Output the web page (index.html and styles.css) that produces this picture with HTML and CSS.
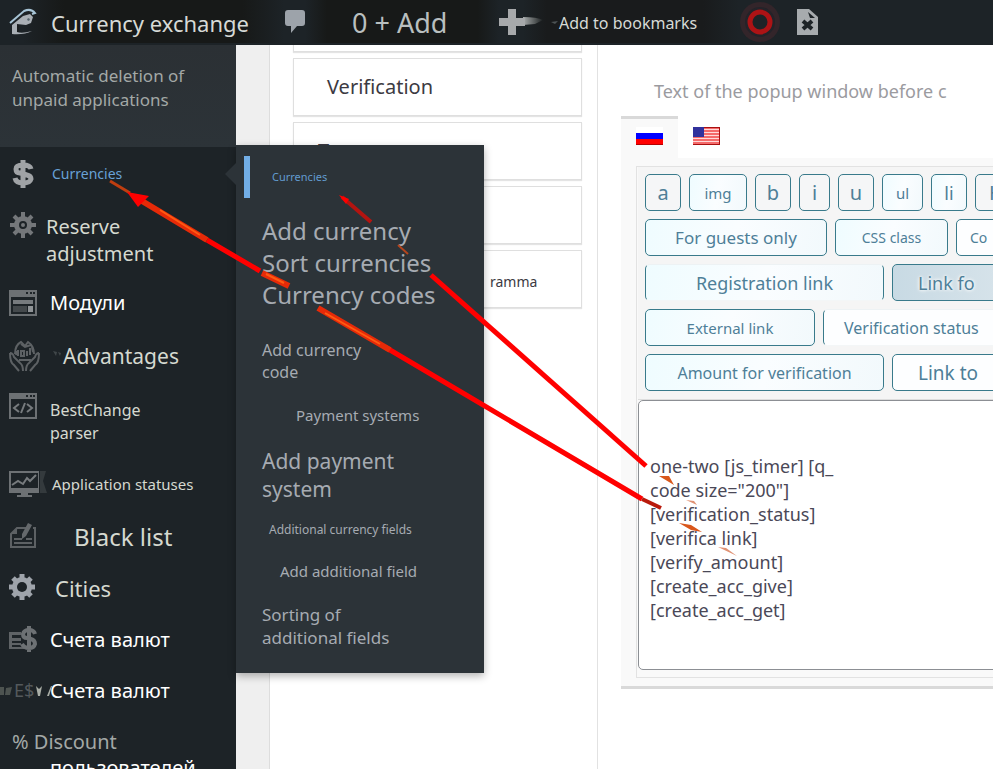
FILE: index.html
```html
<!DOCTYPE html>
<html lang="en">
<head>
<meta charset="utf-8">
<title>Currency exchange</title>
<link rel="stylesheet" href="styles.css">
</head>
<body>
<div class="page">
  <header class="topbar">
    <a class="top-item top-home" href="#">
      <svg width="28" height="28" viewBox="0 0 28 28" aria-hidden="true">
        <path d="M1 15 15 3q7-3 11 2l-3 1" fill="none" stroke="#a7c4d6" stroke-width="2"/>
        <path d="M3 17 14 8l7-2 3 3-2 6-5 2-9-1v8q5 2 15-1-8 4-20 3z" fill="#a9afb5"/>
        <path d="M8 17h2v7H8z" fill="#1b1f21"/>
        <path d="M19 10l2 1-1 2-2-1z" fill="#56646d"/>
      </svg>
      <span>Currency exchange</span>
    </a>
    <a class="top-item top-add" href="#">
      <svg width="22" height="25" viewBox="0 0 22 25" aria-hidden="true">
        <path d="M4 1h14q3 0 3 3v10q0 3-3 3h-5l-6 7v-7H4q-3 0-3-3V4q0-3 3-3z" fill="#9da3aa"/>
      </svg>
      <span>0 + Add</span>
    </a>
    <a class="top-item top-bookmark" href="#">
      <svg width="60" height="28" viewBox="0 0 60 28" aria-hidden="true">
        <defs>
          <linearGradient id="streak"><stop offset="0" stop-color="#a9adad"/><stop offset="1" stop-color="#1b1f20"/></linearGradient>
        </defs>
        <path d="M24 9q14 0 20 3l-8 4-12 1z" fill="url(#streak)"/>
        <path d="M9 1h8v9h9v8h-9v9H9v-9H0v-8h9z" fill="#a7a9ab"/>
        <path d="M52 14l7-1-3 3z" fill="#4c5354"/>
      </svg>
      <span>Add to bookmarks</span>
    </a>
    <a class="top-item" href="#" aria-label="Status">
      <svg width="42" height="42" viewBox="0 0 42 42" aria-hidden="true">
        <circle cx="21" cy="21" r="20" fill="#33252a"/>
        <circle cx="21" cy="21" r="15" fill="#242329"/>
        <circle cx="21" cy="21" r="10" fill="#1d2327" stroke="#ad1315" stroke-width="5"/>
      </svg>
    </a>
    <a class="top-item" href="#" aria-label="Clear cache">
      <svg width="22" height="28" viewBox="0 0 22 28" aria-hidden="true">
        <path d="M0 1h12l9 8v18H0z" fill="#a7abae"/>
        <path d="M11 4l7 6h-5z" fill="#1d2327"/>
        <path d="M6 13l9 8M15 13l-9 8" stroke="#1d2327" stroke-width="4"/>
      </svg>
    </a>
  </header>

  <div class="body">
    <nav class="sidebar" aria-label="Main menu">
      <a class="intro" href="#">Automatic deletion of<br>unpaid applications</a>
      <ul class="menu">
        <li class="item current">
          <a href="#">
            <svg class="icon" width="28" height="30" viewBox="0 0 28 30" aria-hidden="true">
              <path d="M22 10q-1-4-8-4t-7 4q0 4 4 4l7 2q4 1 4 4-1 4-8 4t-8-5M14 1v28" fill="none" stroke="#a0a3a6" stroke-width="5"/>
            </svg>
            <span class="label s14 in6">Currencies</span>
          </a>
          <div class="flyout">
            <a class="flyout-head" href="#">Currencies</a>
            <div class="flyout-list">
              <div class="flyout-group">
                <a href="#">Add currency</a>
                <a href="#">Sort currencies</a>
                <a href="#">Currency codes</a>
              </div>
              <a class="fly-code" href="#">Add currency<br>code</a>
              <a class="fly-pay" href="#">Payment systems</a>
              <a class="fly-addpay" href="#">Add payment<br>system</a>
              <a class="fly-fields" href="#">Additional currency fields</a>
              <a class="fly-addfield" href="#">Add additional field</a>
              <a class="fly-sort" href="#">Sorting of<br>additional fields</a>
            </div>
          </div>
        </li>
        <li class="item double">
          <a href="#">
            <svg class="icon raised" width="28" height="28" viewBox="0 0 28 28" aria-hidden="true">
              <g stroke="#74777a" stroke-width="4">
                <path d="M14 1v26M1 14h26"/>
                <path d="M5 5l18 18M23 5L5 23"/>
              </g>
              <circle cx="14" cy="14" r="9" fill="#74777a"/>
              <circle cx="14" cy="14" r="3" fill="#74777a" stroke="#1d2327" stroke-width="2"/>
            </svg>
            <span class="label s20">Reserve adjustment</span>
          </a>
        </li>
        <li class="item">
          <a href="#">
            <svg class="icon" width="28" height="26" viewBox="0 0 28 26" aria-hidden="true">
              <path d="M0 0h28v26H0z" fill="#6d7174"/>
              <path d="M2 7h24v17H2z" fill="#1d2327"/>
              <path d="M17 2h2v2h-2zM21 2h2v2h-2zM24 2h2v2h-2z" fill="#1d2327"/>
              <path d="M4 10h20v4H4z" fill="#777b7e"/>
              <path d="M4 16h14v6H4z" fill="#44494c"/>
              <path d="M19 16h5v6h-5z" fill="#8f9396"/>
            </svg>
            <span class="label s20 in4 white">Модули</span>
          </a>
        </li>
        <li class="item">
          <a href="#">
            <svg class="icon" width="31" height="32" viewBox="0 0 31 32" aria-hidden="true">
              <g fill="none" stroke="#5d6164" stroke-width="2">
                <path d="M6 14Q6 5 12 2l4 4 3-4q6 4 6 12M8 11l-1 4M12 4l4 3 6-2M23 7l1 5"/>
                <path d="M9 10v6M12 11h3v5h-3zM18 11v5M21 8v7M10 20h12"/>
                <path d="M1 13q0 10 4 12l5 6M1 13q3 0 4 4l6 6q3 2 3 8M30 13q0 10-4 12l-5 6M30 13q-3 0-4 4l-6 6q-3 2-3 8"/>
              </g>
              <path d="M44 11l4 1-1 4zM49 12l3 1-1 3z" fill="#41474a"/>
            </svg>
            <span class="label s21 in14">Advantages</span>
          </a>
        </li>
        <li class="item double">
          <a href="#">
            <svg class="icon raised" width="28" height="26" viewBox="0 0 28 26" aria-hidden="true">
              <path d="M0 0h28v26H0z" fill="#6d7174"/>
              <path d="M2 6h24v18H2z" fill="#1d2327"/>
              <path d="M17 2h2v2h-2zM21 2h2v2h-2zM24 2h2v2h-2z" fill="#1d2327"/>
              <path d="M10 11l-5 4 5 4M18 11l5 4-5 4M16 10l-4 10" fill="none" stroke="#777b7e" stroke-width="2"/>
            </svg>
            <span class="label s16 in4">BestChange<br>parser</span>
          </a>
        </li>
        <li class="item lower">
          <a href="#">
            <svg class="icon" width="30" height="26" viewBox="0 0 30 26" aria-hidden="true">
              <path d="M0 0h30v22H19v2h4v2H8v-2h4v-2H0z" fill="#6d7174"/>
              <path d="M2 2h27v15H2z" fill="#1d2327"/>
              <path d="M3 14l6-4 5 3 4-6 3 3 6-6" fill="none" stroke="#777b7e" stroke-width="2"/>
              <path d="M31 0h6l-3 10 4 12h-7z" fill="#343a3d"/>
            </svg>
            <span class="label s15 in6">Application statuses</span>
          </a>
        </li>
        <li class="item lower">
          <a href="#">
            <svg class="icon" width="28" height="26" viewBox="0 0 28 26" aria-hidden="true">
              <path d="M17 5H8L2 11v13h24V5h-2" fill="none" stroke="#5d6164" stroke-width="2"/>
              <path d="M8 5v6H2z" fill="#5d6164"/>
              <path d="M5 20h18M5 16h8M17 16h6" stroke="#5d6164" stroke-width="2"/>
              <path d="M19 0l4 2-6 11-4 3v-5z" fill="#65696c"/>
            </svg>
            <span class="label s24 in28">Black list</span>
          </a>
        </li>
        <li class="item lower">
          <a href="#">
            <svg class="icon" width="28" height="28" viewBox="0 0 28 28" aria-hidden="true">
              <g stroke="#9fa4ab" stroke-width="5">
                <path d="M13 0v26M0 13h26"/>
                <path d="M4 4l18 18M22 4L4 22"/>
              </g>
              <circle cx="13" cy="13" r="10" fill="#9fa4ab"/>
              <circle cx="13" cy="13" r="5" fill="#1d2327"/>
            </svg>
            <span class="label s22 in9">Cities</span>
          </a>
        </li>
        <li class="item compact">
          <a href="#">
            <svg class="icon" width="28" height="26" viewBox="0 0 28 26" aria-hidden="true">
              <path d="M0 6h12v3H3v3h9v3H3v2h9v2H3v2h12v2H0z" fill="#5f6366"/>
              <path d="M26 8q-1-4-6-4t-6 4q0 4 4 4l4 1q4 1 4 5-1 4-6 4t-7-4M20 0v26" fill="none" stroke="#6d7174" stroke-width="4"/>
            </svg>
            <span class="label s20 in4 white">Счета валют</span>
          </a>
        </li>
        <li class="item lower">
          <a href="#">
            <span class="icon currency-mark">E$</span>
            <span class="label s20 in4 white">Счета валют</span>
          </a>
        </li>
        <li class="discount">
          <a href="#">% Discount<span class="white">пользователей</span></a>
        </li>
      </ul>
    </nav>

    <main class="content">
      <section class="blocks" aria-label="Blocks">
        <div class="card"></div>
        <div class="card">Verification</div>
        <div class="card card-tucked">Т</div>
        <div class="card"></div>
        <div class="card card-right">ramma</div>
      </section>

      <section class="editor">
        <label class="editor-title" for="popup-text">Text of the popup window before c</label>
        <div class="tabs">
          <button class="tab active" type="button" aria-label="Русский">
            <svg width="27" height="18" viewBox="0 0 27 18" aria-hidden="true">
              <path d="M0 0h27v6H0z" fill="#fff"/><path d="M0 6h27v6H0z" fill="#00f"/><path d="M0 12h27v6H0z" fill="#f00"/><path d="M0 17h27v1H0z" fill="#b40000"/>
            </svg>
          </button>
          <button class="tab" type="button" aria-label="English">
            <svg width="27" height="18" viewBox="0 0 27 18" aria-hidden="true">
              <path d="M0 0h27v18H0z" fill="#ffd9d9"/>
              <path d="M0 1h27M0 4h27M0 7h27M0 10h27M0 13h27M0 16h27" stroke="#f56a6a" stroke-width="2"/>
              <path d="M0 0h27v1H0zM0 17h27v1H0zM26 0h1v18h-1z" fill="#a81010"/>
              <path d="M0 0h11v10H0z" fill="#31319c"/>
            </svg>
          </button>
        </div>
        <div class="tab-panel">
          <div class="editor-box">
            <div class="toolbar">
              <div class="tool-row">
                <button type="button" class="tool w36 t20">a</button>
                <button type="button" class="tool w58 t15 tint">img</button>
                <button type="button" class="tool w36 t20">b</button>
                <button type="button" class="tool w31 t20">i</button>
                <button type="button" class="tool w36 t20">u</button>
                <button type="button" class="tool w41 t15 tint">ul</button>
                <button type="button" class="tool w36 t18 tint">li</button>
                <button type="button" class="tool w58 t20 cut-sm">H</button>
              </div>
              <div class="tool-row">
                <button type="button" class="tool w182 t17 tint">For guests only</button>
                <button type="button" class="tool w113 t14 tint">CSS class</button>
                <button type="button" class="tool w113 t14 cut-sm plain">Co</button>
              </div>
              <div class="tool-row">
                <button type="button" class="tool w239 t18 tint open">Registration link</button>
                <button type="button" class="tool w182 t18 cut-lg shade">Link fo</button>
              </div>
              <div class="tool-row">
                <button type="button" class="tool w170 t15 tint">External link</button>
                <button type="button" class="tool w182 t16 cut-md plain open">Verification status</button>
              </div>
              <div class="tool-row">
                <button type="button" class="tool w239 t16 tint">Amount for verification</button>
                <button type="button" class="tool w182 t19 cut-lg plain">Link to</button>
              </div>
            </div>
            <textarea id="popup-text" spellcheck="false">one-two [js_timer] [q_
code size="200"]
[verification_status]
[verifica link]
[verify_amount]
[create_acc_give]
[create_acc_get]</textarea>
          </div>
        </div>
      </section>
    </main>
  </div>

  <svg class="arrows" width="993" height="769" viewBox="0 0 993 769" aria-hidden="true">
    <g fill="none" stroke="#f00" stroke-width="5">
      <path d="M431 275L646 466"/>
      <path d="M207 240L260 271M385 347L642 499"/>
      <path d="M342 197L371 222" stroke="#b31410" stroke-width="4"/>
      <path d="M398 245L408 254" stroke="#b3441c" stroke-width="2"/>
      <path d="M142 201L207 240M262 273L289 286M318 308L390 350" stroke="#e62a08" stroke-width="6"/>
      <path d="M160 210L200 235M266 274L284 283M325 313L380 344" stroke="#ff5a12" stroke-width="2"/>
      <path d="M110 181L130 193" stroke="#bf3e10" stroke-width="3"/>
      <path d="M642 499L661 508" stroke="#b91a0c" stroke-width="4"/>
    </g>
    <path d="M127 192l22 4-7 7-4 4z" fill="#f00"/>
    <path d="M339 195l10 4-3 5z" fill="#f00"/>
    <path d="M659 476h10l5 9zM679 523l12 2 11 7-11-2z" fill="#d9571b"/>
    <path d="M686 500l8 1 3 4zM718 547l8 1 11 8z" fill="#e09274"/>
    <path d="M0 687h4v8H0zM6 688l6-1-2 8H5z" fill="#4d5350"/>
    <path d="M36 686l3 3 3-3-2 10h-2zM47 696l4-10h1l-3 10z" fill="#a9ada6"/>
  </svg>
</div>
</body>
</html>
```
FILE: styles.css
```css
* { box-sizing: border-box; }

body {
  margin: 0;
  background: #fff;
  color: #3c3a42;
  font-family: "Noto Sans", sans-serif;
}

a { color: inherit; text-decoration: none; }
button, textarea { font-family: inherit; }
svg { display: block; flex: none; overflow: visible; }

.page {
  position: relative;
  display: flex;
  flex-direction: column;
  height: 100vh;
  overflow: hidden;
}

/* Top bar */
.topbar {
  display: grid;
  grid-template-columns: 275px 215px 240px 58px 1fr;
  flex: none;
  height: 45px;
  padding-left: 9px;
  background: #1d2327;
  color: #d6dad6;
  line-height: 44px;
  white-space: nowrap;
}
.top-item { display: flex; align-items: center; height: 43px; }
.top-item span { padding-top: 2px; }
.top-home { gap: 14px; font-size: 22px; background: linear-gradient(90deg, #1d2327 5%, #171918 20%, #171918 85%, #1d2327); }
.top-add { gap: 46px; font-size: 27px; color: #b9bfbf; background: linear-gradient(90deg, #1d2327 10%, #171918 20%, #171918 90%, #1d2327); }
.top-bookmark { font-size: 16px; background: linear-gradient(90deg, #1d2327 10%, #191b1c 20%, #191b1c 85%, #1d2327); }

/* Sidebar */
.body { display: flex; flex: 1; min-height: 0; }
.sidebar {
  position: relative;
  z-index: 2;
  flex: none;
  width: 236px;
  background: #1d2327;
}
.intro {
  display: block;
  height: 102px;
  padding: 19px 12px 0;
  background: linear-gradient(#2b3034, #2c3338);
  color: #a3a8a6;
  font-size: 17px;
  line-height: 24px;
}
.menu { margin: 0; padding: 0; list-style: none; color: #d5d9d0; }
.item { position: relative; height: 53px; }
.item > a { display: flex; align-items: center; height: 100%; padding-left: 9px; }
.item.double { height: 76px; }
.item.double .label { padding-top: 4px; }
.item.lower { height: 52px; }
.item.compact { height: 50px; }
.icon { margin-right: auto; }
.icon.raised { align-self: flex-start; margin-top: 11px; }
.label { flex: none; width: 190px; }
.current .label { color: #68a1d6; }
.white { color: #fff; }
.in4 { padding-left: 4px; }
.in6 { padding-left: 6px; }
.in9 { padding-left: 9px; }
.in14 { padding-left: 17px; }
.in28 { padding-left: 28px; }
.s14 { font-size: 14px; }
.s15 { font-size: 15px; }
.s16 { font-size: 16px; line-height: 23px; }
.s20 { font-size: 20px; line-height: 27px; }
.double .s20 { padding-right: 60px; }
.s21 { font-size: 21px; }
.s22 { font-size: 22px; }
.s24 { font-size: 24px; }
.currency-mark { padding-left: 5px; color: #54595c; font-size: 18px; }
.discount { padding: 13px 0 0 12px; color: #a3a8a6; font-size: 20px; line-height: 26px; }
.discount span { display: block; padding-left: 38px; }

/* Flyout menu */
.current::after {
  content: "";
  position: absolute;
  top: 16px;
  right: 0;
  border: 11px solid transparent;
  border-left: 0;
  border-right-color: #2c3338;
}
.flyout {
  position: absolute;
  top: -2px;
  left: 100%;
  width: 248px;
  padding: 11px 0 24px 8px;
  background: #2c3338;
  box-shadow: 0 3px 8px rgba(0, 0, 0, .3);
  color: #a6abb2;
  white-space: nowrap;
}
.flyout-head {
  display: block;
  padding-left: 22px;
  border-left: 6px solid #72aee6;
  color: #629bd0;
  font-size: 11px;
  line-height: 42px;
}
.flyout-list { display: flex; flex-direction: column; gap: 18px; padding: 17px 0 0 18px; }
.flyout-group { display: flex; flex-direction: column; font-size: 24px; line-height: 32px; }
.fly-code { margin-top: 10px; font-size: 16px; line-height: 22px; }
.fly-pay { padding-left: 34px; font-size: 15px; line-height: 28px; }
.fly-addpay { font-size: 21px; line-height: 28px; }
.fly-fields { padding-left: 7px; font-size: 12px; line-height: 18px; }
.fly-addfield { padding-left: 18px; font-size: 15px; line-height: 28px; }
.fly-sort { font-size: 17px; line-height: 23px; }

/* Block list */
.content {
  display: flex;
  flex: 1;
  min-width: 0;
  border-left: 33px solid #efefef;
}
.blocks {
  display: flex;
  flex-direction: column;
  flex: none;
  gap: 6px;
  width: 328px;
  padding: 0 15px 0 23px;
  border-left: 1px solid #ddd;
  overflow: hidden;
}
.card {
  flex: none;
  height: 58px;
  padding-left: 33px;
  border: 1px solid #dfdfdf;
  box-shadow: 0 1px 1px #e4e4e4;
  font-size: 20px;
  line-height: 56px;
}
.card:first-child { margin-top: -51px; }
.card-tucked { padding-left: 24px; }
.card-right { padding-left: 196px; font-size: 14px; line-height: 61px; }

/* Editor */
.editor {
  flex: 1;
  min-width: 0;
  padding: 33px 0 0 23px;
  border-left: 1px solid #e2e2e2;
}
.editor-title {
  display: block;
  padding-left: 33px;
  color: #9b9b9f;
  font-size: 18px;
  line-height: 26px;
  white-space: nowrap;
}
.tabs { display: flex; margin-top: 12px; }
.tab {
  width: 57px;
  height: 42px;
  padding: 0 0 5px 15px;
  border: 0;
  border-top: 3px solid transparent;
  background: none;
}
.tab.active { border-color: #d9d9d9; background: #f9f9f9; }
.tab-panel {
  padding: 8px 0 8px 15px;
  border-bottom: 3px solid #d9d9d9;
  background: #f9f9f9;
}
.editor-box { border: 1px solid #e2e2e2; border-right: 0; padding: 0 0 7px 1px; }
.toolbar {
  display: flex;
  flex-direction: column;
  gap: 8px;
  padding: 7px 0 8px 7px;
  border-bottom: 1px solid #ddd;
  background: #f5f5f5;
}
.tool-row { display: flex; gap: 8px; overflow: hidden; }
.tool {
  flex: none;
  height: 37px;
  padding: 0;
  border: 1px solid #397a8b;
  border-radius: 5px;
  background: #f5f6f7;
  color: #4e7f98;
  white-space: nowrap;
}
.tint { background: linear-gradient(100deg, #effcff, #fafdff 50%, #f2f9fc); }
.plain { background: #fdfeff; }
.shade { background: linear-gradient(90deg, #c8dae4, #e0e9ee); text-shadow: 0 0 3px #fff, 0 0 4px #fff; }
.open { border-top-color: #edf2f4; border-bottom-color: #f3f6f7; }
.cut-sm { padding-left: 13px; text-align: left; }
.cut-md { padding-left: 20px; text-align: left; }
.cut-lg { padding-left: 25px; text-align: left; }
.w31 { width: 31px; }
.w36 { width: 36px; }
.w41 { width: 41px; }
.w58 { width: 58px; }
.w113 { width: 113px; }
.w170 { width: 170px; }
.w182 { width: 182px; }
.w239 { width: 239px; }
.t14 { font-size: 14px; }
.t15 { font-size: 15px; }
.t16 { font-size: 16px; }
.t17 { font-size: 17px; }
.t18 { font-size: 18px; }
.t19 { font-size: 19px; }
.t20 { font-size: 20px; }

textarea {
  display: block;
  width: calc(100% + 8px);
  height: 270px;
  padding: 53px 11px 0;
  border: 1px solid #8c8f94;
  border-radius: 5px;
  outline: 0;
  background: #fff;
  color: #4a4857;
  font-size: 18px;
  line-height: 24px;
  resize: none;
}

.arrows { position: absolute; top: 0; left: 0; z-index: 3; pointer-events: none; }
```
